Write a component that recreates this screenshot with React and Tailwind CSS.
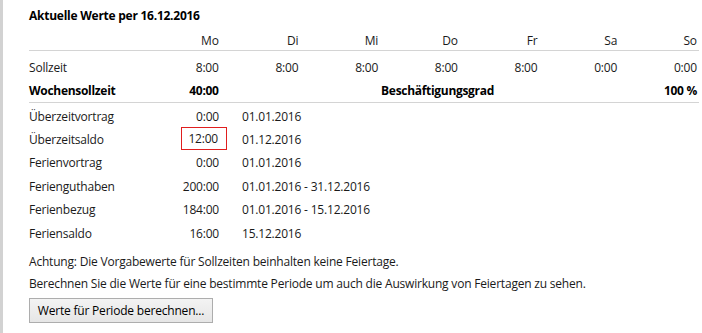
import React from "react";

const days = ["Mo", "Di", "Mi", "Do", "Fr", "Sa", "So"];
const soll = ["8:00", "8:00", "8:00", "8:00", "8:00", "0:00", "0:00"];

const saldi = [
  { label: "Überzeitvortrag", value: "0:00", date: "01.01.2016" },
  { label: "Überzeitsaldo", value: "12:00", date: "01.12.2016", marked: true },
  { label: "Ferienvortrag", value: "0:00", date: "01.01.2016" },
  { label: "Ferienguthaben", value: "200:00", date: "01.01.2016 - 31.12.2016" },
  { label: "Ferienbezug", value: "184:00", date: "01.01.2016 - 15.12.2016" },
  { label: "Feriensaldo", value: "16:00", date: "15.12.2016" },
];

const App = () => {
  return (
    <div
      className="flex min-h-[333px] w-[702px] bg-white text-[12px] tracking-[-0.2px] text-[#1a1a1a]"
      style={{ fontFamily: '"Open Sans", "Noto Sans", sans-serif' }}
    >
      <div className="w-[3px] shrink-0 bg-[#d2d2d2]" />
      <div className="flex-1 pl-[26px] pr-[3px]">
        <h2 className="h-[31px] pt-[6px] text-[12px] font-bold leading-[20px] tracking-[-0.25px] text-black">
          Aktuelle Werte per 16.12.2016
        </h2>

        {/* Wochentage */}
        <div className="flex h-[20px] border-b border-[#d4d4d4] leading-[20px]">
          <div className="w-[112px]" />
          {days.map((d) => (
            <div key={d} className="w-[79.7px] pr-[2px] text-right">
              {d}
            </div>
          ))}
        </div>

        <div className="border-b border-[#d4d4d4] pt-[5px]">
          <div className="flex h-[23px] items-center">
            <div className="w-[112px]">Sollzeit</div>
            {soll.map((s, i) => (
              <div key={i} className="w-[79.7px] pr-[2px] text-right">
                {s}
              </div>
            ))}
          </div>
          <div className="flex h-[23px] items-center font-bold tracking-[-0.3px] text-black">
            <div className="w-[112px]">Wochensollzeit</div>
            <div className="w-[79.7px] pr-[2px] text-right">40:00</div>
            <div className="w-[159.4px]" />
            <div className="flex-1 pl-[1px]">Beschäftigungsgrad</div>
            <div className="pr-[2px] text-right">100 %</div>
          </div>
        </div>

        <div className="pt-[2px]">
          {saldi.map((r) => (
            <div key={r.label} className="flex h-[23.4px] items-center">
              <div className="w-[152px]">{r.label}</div>
              <div
                className={`flex h-[23px] w-[46px] items-center justify-end pr-[8px] ${
                  r.marked ? "-mt-[3px] border border-[#e01e1e]" : ""
                }`}
              >
                {r.value}
              </div>
              <div className="pl-[15px]">{r.date}</div>
            </div>
          ))}
        </div>

        <div className="pt-[6px] leading-[22px]">
          <p>Achtung: Die Vorgabewerte für Sollzeiten beinhalten keine Feiertage.</p>
          <p>
            Berechnen Sie die Werte für eine bestimmte Periode um auch die Auswirkung von
            Feiertagen zu sehen.
          </p>
        </div>

        <button
          type="button"
          className="mt-[3px] h-[25px] w-[184px] border border-[#adadad] bg-gradient-to-b from-[#f3f3f3] to-[#e6e6e6] text-[12px] text-black"
        >
          Werte für Periode berechnen...
        </button>
      </div>
    </div>
  );
};

export default App;
